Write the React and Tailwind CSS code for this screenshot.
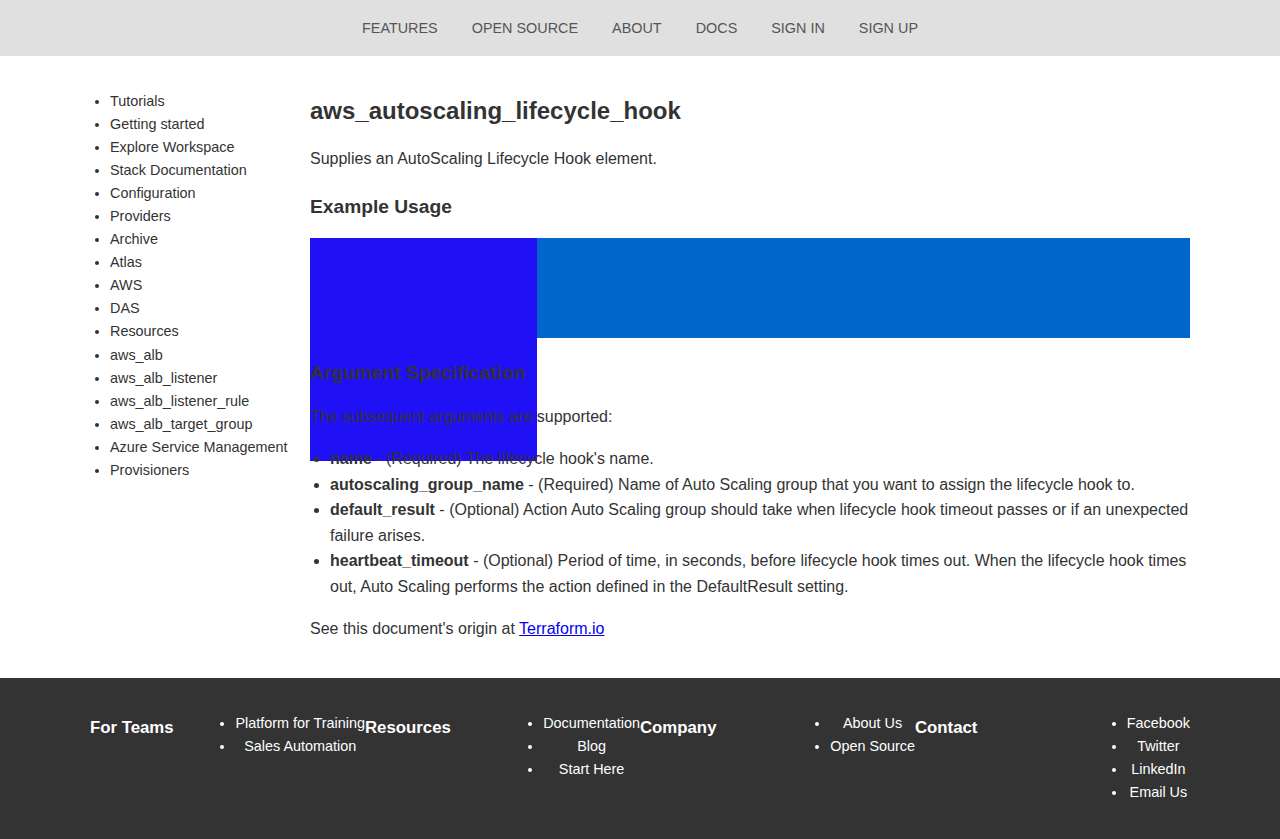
const navLinks = ['Features', 'Open Source', 'About', 'Docs', 'Sign In', 'Sign Up']

const sidebarLinks = [
  'Tutorials',
  'Getting started',
  'Explore Workspace',
  'Stack Documentation',
  'Configuration',
  'Providers',
  'Archive',
  'Atlas',
  'AWS',
  'DAS',
  'Resources',
  'aws_alb',
  'aws_alb_listener',
  'aws_alb_listener_rule',
  'aws_alb_target_group',
  'Azure Service Management',
  'Provisioners'
]

const args = [
  { name: 'name', text: "(Required) The lifecycle hook's name." },
  { name: 'autoscaling_group_name', text: '(Required) Name of Auto Scaling group that you want to assign the lifecycle hook to.' },
  { name: 'default_result', text: '(Optional) Action Auto Scaling group should take when lifecycle hook timeout passes or if an unexpected failure arises.' },
  { name: 'heartbeat_timeout', text: '(Optional) Period of time, in seconds, before lifecycle hook times out. When the lifecycle hook times out, Auto Scaling performs the action defined in the DefaultResult setting.' }
]

const footerSections = [
  { title: 'For Teams', links: ['Platform for Training', 'Sales Automation'] },
  { title: 'Resources', links: ['Documentation', 'Blog', 'Start Here'] },
  { title: 'Company', links: ['About Us', 'Open Source'] },
  { title: 'Contact', links: ['Facebook', 'Twitter', 'LinkedIn', 'Email Us'] }
]

export default function App() {
  return (
    <div className="min-h-screen bg-white text-[#333] font-['Liberation_Sans',Arial,sans-serif]">
      {/* Top navigation */}
      <nav className="h-14 bg-[#e0e0e0] flex justify-center items-center pt-[2px]">
        {navLinks.map(link => (
          <a key={link} href="#" className="px-[17px] text-[14.4px] uppercase text-[#555]">
            {link}
          </a>
        ))}
      </nav>

      <div className="max-w-[1100px] mx-auto flex pt-[34px] pb-[37px]">
        {/* Sidebar */}
        <aside className="w-[220px] shrink-0">
          <ul className="list-disc pl-5 text-[14.4px] leading-[1.6]">
            {sidebarLinks.map(link => (
              <li key={link}>{link}</li>
            ))}
          </ul>
        </aside>

        {/* Main content */}
        <main className="flex-1 text-base leading-[1.6]">
          <h1 className="text-[24px] font-bold leading-[1.6] mt-[2px] mb-4">aws_autoscaling_lifecycle_hook</h1>
          <p className="mb-5">Supplies an AutoScaling Lifecycle Hook element.</p>

          <h3 className="text-[19.2px] font-bold leading-[1.6] mb-[15px]">Example Usage</h3>
          <div className="h-[100px] bg-[#0066cc] mb-5">
            <div className="w-[227px] h-[223px] bg-[#2010f5]"></div>
          </div>

          <h3 className="text-[19.2px] font-bold leading-[1.6] mb-4">Argument Specification</h3>
          <p className="mb-4">The subsequent arguments are supported:</p>
          <ul className="list-disc pl-5 mb-4">
            {args.map(arg => (
              <li key={arg.name}>
                <strong className="font-bold">{arg.name}</strong> - {arg.text}
              </li>
            ))}
          </ul>
          <p>
            See this document's origin at{' '}
            <a href="#" className="text-[#0000ee] underline">Terraform.io</a>
          </p>
        </main>
      </div>

      {/* Footer */}
      <footer className="bg-[#333] text-white pt-[34px] pb-[35px]">
        <div className="max-w-[1100px] mx-auto flex">
          {footerSections.map(section => (
            <div key={section.title} className="flex-1 flex justify-between items-start">
              <h3 className="text-[16.8px] font-bold leading-[26px] mt-[3px]">{section.title}</h3>
              <ul className="list-disc pl-5 text-[14.4px] leading-[23px] text-center">
                {section.links.map(link => (
                  <li key={link}>{link}</li>
                ))}
              </ul>
            </div>
          ))}
        </div>
      </footer>
    </div>
  )
}
